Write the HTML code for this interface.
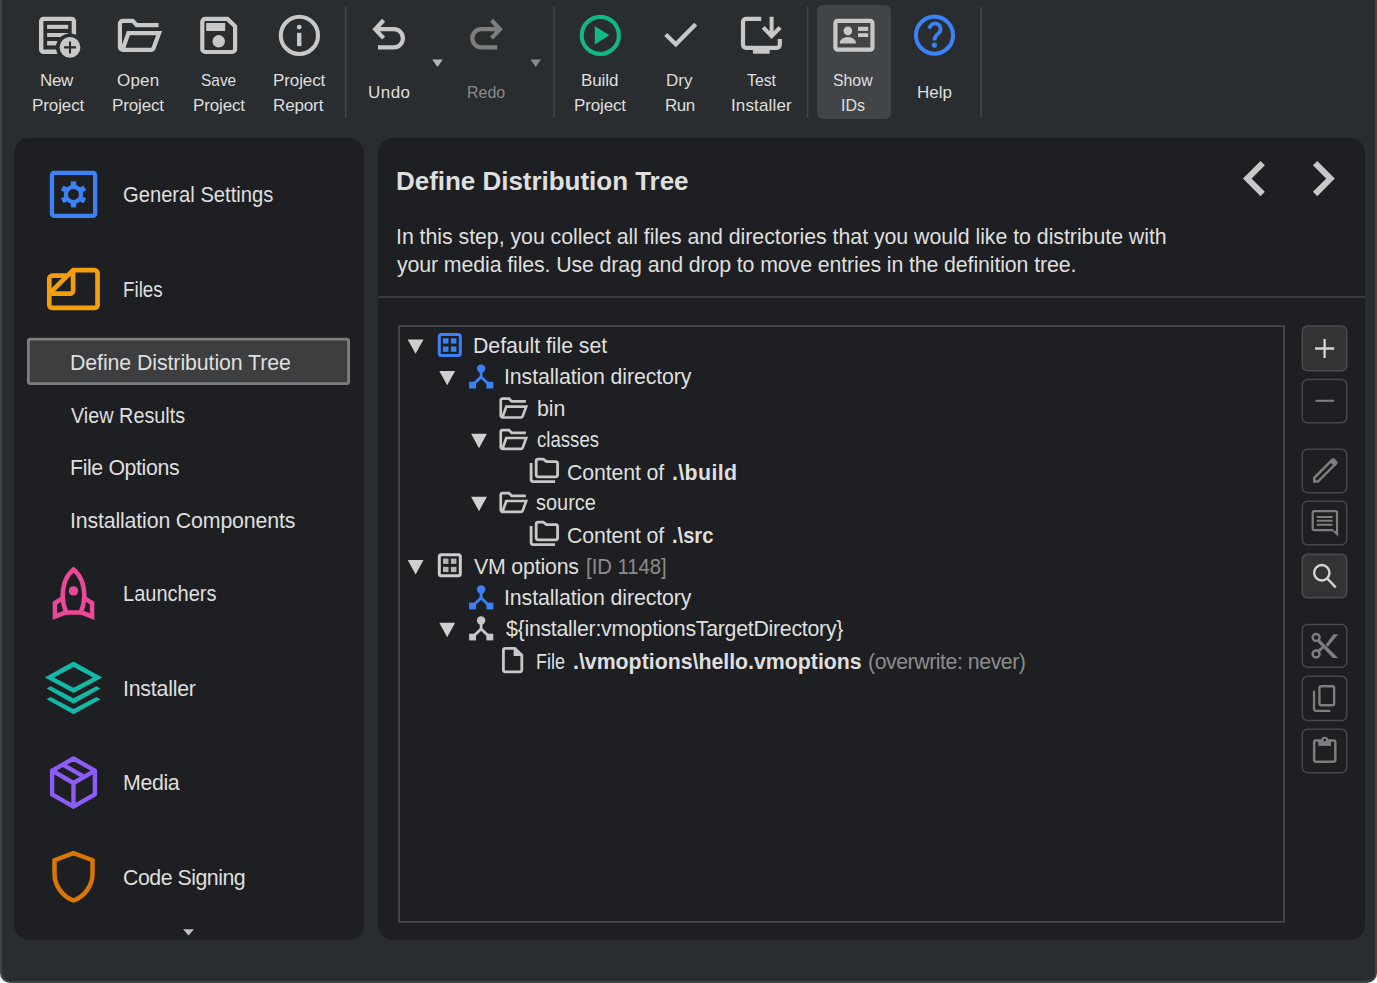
<!DOCTYPE html><html><head><meta charset="utf-8"><title>install4j - Define Distribution Tree</title><style>
html,body{margin:0;padding:0;background:#fff;}
body{width:1377px;height:983px;overflow:hidden;font-family:"Liberation Sans",sans-serif;}
#win{position:absolute;left:0;top:0;width:1373px;height:981px;background:#292d30;border:2px solid #444;border-top:none;border-radius:0 0 10px 10px;overflow:hidden;}
#root{position:absolute;left:-2px;top:0;width:1377px;height:983px;}
.t{position:absolute;white-space:nowrap;line-height:30px;height:30px;}
.panel{position:absolute;background:#1e1f22;border-radius:15px;}
.sep{position:absolute;width:1px;top:7px;height:111px;background:#434547;}
.btn{position:absolute;left:1301px;width:44px;height:44px;border:1px solid #48494b;border-radius:5px;background:#1e1f22;}
.btn.en{background:#323335;border-color:#4b4c4e;}
svg{position:absolute;overflow:visible;}
</style></head><body><div id="win"><div id="root">
<div style="position:absolute;left:817px;top:5px;width:74px;height:114px;border-radius:6px;background:#424548"></div>
<div class="panel" style="left:14px;top:138px;width:350px;height:802px"></div>
<div class="panel" style="left:378px;top:138px;width:987px;height:802px"></div>
<svg width="1377" height="983" viewBox="0 0 1377 983" style="left:0;top:0" fill="none"><path d="M345.6 7V117.6" stroke="#45474a" stroke-width="1.5"/><path d="M554.1 7V117.6" stroke="#45474a" stroke-width="1.5"/><path d="M807.6 7V117.6" stroke="#45474a" stroke-width="1.5"/><path d="M981.1 7V117.6" stroke="#45474a" stroke-width="1.5"/><rect x="28.4" y="339.1" width="320.2" height="44.5" rx="1.8" fill="#3d3e40" stroke="#7c7e80" stroke-width="2.8"/><path d="M378 296.9H1365" stroke="#424445" stroke-width="1.5"/><rect x="399.05" y="326.05" width="885" height="595.75" stroke="#4d4f4f" stroke-width="1.5"/><rect x="1302.3" y="325.95" width="44.4" height="44.75" rx="5.2" fill="#323335" stroke="#4b4c4f" stroke-width="1.5"/><rect x="1302.3" y="379.4" width="44.4" height="43.35" rx="5.2" fill="none" stroke="#47484b" stroke-width="1.5"/><rect x="1302.3" y="449.15" width="44.4" height="43.60" rx="5.2" fill="none" stroke="#47484b" stroke-width="1.5"/><rect x="1302.3" y="501.25" width="44.4" height="43.50" rx="5.2" fill="none" stroke="#47484b" stroke-width="1.5"/><rect x="1302.3" y="554.35" width="44.4" height="43.40" rx="5.2" fill="#323335" stroke="#4b4c4f" stroke-width="1.5"/><rect x="1302.3" y="624.5" width="44.4" height="42.75" rx="5.2" fill="none" stroke="#47484b" stroke-width="1.5"/><rect x="1302.3" y="676.35" width="44.4" height="44.20" rx="5.2" fill="none" stroke="#47484b" stroke-width="1.5"/><rect x="1302.3" y="729.15" width="44.4" height="43.60" rx="5.2" fill="none" stroke="#47484b" stroke-width="1.5"/></svg>
<svg width="1377" height="983" viewBox="0 0 1377 983" style="left:0;top:0" fill="none" stroke-linejoin="miter"><rect x="41.2" y="18.9" width="32.7" height="32.9" rx="2.4" stroke="#c8c8c8" stroke-width="4.4"/><rect x="47.1" y="24.8" width="21.1" height="4.1" fill="#c8c8c8"/><rect x="47.1" y="33" width="21.1" height="4" fill="#c8c8c8"/><rect x="47.1" y="41" width="21.1" height="4.4" fill="#c8c8c8"/><circle cx="70" cy="47.4" r="14" fill="#292d30"/><circle cx="70" cy="47.4" r="10.4" fill="#c8c8c8"/><path d="M64 47.4H76M70 41.4V53.4" stroke="#292d30" stroke-width="2.1"/><path d="M158.6 25.1H136.7L132.7 20.9H122.9a3 3 0 0 0-3 3V46.8a3 3 0 0 0 3 3H150.9a3 3 0 0 0 2.8-2L159.1 33.1H128.4L122.7 49.2" stroke="#c8c8c8" stroke-width="4.2"/><path d="M205.3 18.9H227.5L235.1 26.3V49a3 3 0 0 1-3 3H205.3a3 3 0 0 1-3-3V21.9a3 3 0 0 1 3-3Z" stroke="#c8c8c8" stroke-width="4.2"/><rect x="206.2" y="23" width="19" height="8" fill="#c8c8c8"/><circle cx="218.7" cy="41.3" r="6.2" fill="#c8c8c8"/><circle cx="299.4" cy="35.4" r="18.6" stroke="#c8c8c8" stroke-width="4.1"/><circle cx="299.2" cy="27.1" r="2.4" fill="#c8c8c8"/><rect x="297" y="32.8" width="4.4" height="13.3" fill="#c8c8c8"/><path d="M383.6 20.3L375.2 29.2L383.6 38.1M375.5 29.2H393.85A9.05 9.05 0 0 1 393.85 47.3H378" stroke="#c8c8c8" stroke-width="4.2"/><path d="M432.2 59.6H442.8L437.5 67.1Z" fill="#b4b4b4"/><g transform="translate(875.2 0) scale(-1 1)"><path d="M383.6 20.3L375.2 29.2L383.6 38.1M375.5 29.2H393.85A9.05 9.05 0 0 1 393.85 47.3H378" stroke="#7e7e7e" stroke-width="4.2"/></g><path d="M530.4 59.6H541L535.7 67.1Z" fill="#8a8a8a"/><circle cx="600.3" cy="35.4" r="18.55" stroke="#10b981" stroke-width="4.1"/><path d="M594.8 25.9V44.5L609.4 35.2Z" fill="#10b981"/><path d="M665.7 34.5L675.8 44.2L695.7 24.3" stroke="#c8c8c8" stroke-width="4.2"/><path d="M761.2 18.8H746a3 3 0 0 0-3 3V44.8a3 3 0 0 0 3 3H776.8a3 3 0 0 0 3-3V39" stroke="#c8c8c8" stroke-width="4.2"/><rect x="752.9" y="49.5" width="16.8" height="4.2" fill="#c8c8c8"/><path d="M763.2 27.4L771.6 36.1L780.1 27.5M771.6 16.7V35" stroke="#c8c8c8" stroke-width="4"/><rect x="835.4" y="20.8" width="37.1" height="28.9" rx="2.2" stroke="#c8c8c8" stroke-width="4.2"/><circle cx="847.9" cy="30.9" r="4.3" fill="#c8c8c8"/><path d="M839.7 43.4A8.15 6.4 0 0 1 856 43.4Z" fill="#c8c8c8"/><rect x="858" y="26.8" width="10.2" height="4.1" fill="#c8c8c8"/><rect x="858" y="33.2" width="10.2" height="3.8" fill="#c8c8c8"/><circle cx="934.5" cy="35.2" r="18.55" stroke="#3b82f6" stroke-width="4.1"/><path d="M929.6 28.6A5.5 5.5 0 1 1 938.6 33.2Q934.5 36.2 934.5 40.4" stroke="#3b82f6" stroke-width="3.7"/><circle cx="934.4" cy="45.1" r="2.6" fill="#3b82f6"/><rect x="51.95" y="172.85" width="43.2" height="43.1" rx="2.2" stroke="#3b82f6" stroke-width="4.3"/><circle cx="73.5" cy="194.4" r="7.6" stroke="#3b82f6" stroke-width="4.2"/><rect x="70.8" y="181.4" width="5.4" height="5.2" fill="#3b82f6" transform="rotate(0 73.5 194.4)"/><rect x="70.8" y="181.4" width="5.4" height="5.2" fill="#3b82f6" transform="rotate(60 73.5 194.4)"/><rect x="70.8" y="181.4" width="5.4" height="5.2" fill="#3b82f6" transform="rotate(120 73.5 194.4)"/><rect x="70.8" y="181.4" width="5.4" height="5.2" fill="#3b82f6" transform="rotate(180 73.5 194.4)"/><rect x="70.8" y="181.4" width="5.4" height="5.2" fill="#3b82f6" transform="rotate(240 73.5 194.4)"/><rect x="70.8" y="181.4" width="5.4" height="5.2" fill="#3b82f6" transform="rotate(300 73.5 194.4)"/><path d="M52.3 275.7H67.7L73.1 270.2H94.55a3 3 0 0 1 3 3V304.9a3 3 0 0 1-3 3H52.3a3 3 0 0 1-3-3V278.7a3 3 0 0 1 3-3ZM73.1 270.4V290.7a3 3 0 0 1-3 3H49.3L73.1 270.2" stroke="#f59e0b" stroke-width="4.7" stroke-linejoin="round"/><path d="M73.5 569.6C65.8 576 62.7 586 62.7 596C62.7 602 64.2 607.5 66.2 612.4H80.8C82.8 607.5 84.3 602 84.3 596C84.3 586 81.2 576 73.5 569.6Z" stroke="#ec4899" stroke-width="4.5"/><circle cx="73.5" cy="590.9" r="4.7" fill="#ec4899"/><path d="M62 598.6L54.9 603V616.7L66.2 612.2" stroke="#ec4899" stroke-width="4.5"/><path d="M85 598.6L92.1 603V616.7L80.8 612.2" stroke="#ec4899" stroke-width="4.5"/><path fill-rule="evenodd" d="M44.8 677.4L73.5 661.6L102.3 677.4L73.5 693.1ZM54 677.4L73.5 667L93 677.4L73.5 687.7Z" fill="#14b8a6"/><path d="M46.6 688.4L50.7 686.2L73.5 698.3L96.4 686.2L100.6 688.4L73.5 703.7Z" fill="#14b8a6"/><path d="M46.6 699.3L50.7 696.9L73.5 709L96.4 696.9L100.6 699.3L73.5 714.3Z" fill="#14b8a6"/><path d="M73.5 758.5L94.9 770.7V794.4L73.5 806.7L52.1 794.4V770.7ZM52.1 770.7L73.5 783L94.9 770.7M73.5 783V806.7M62.8 764.6L84.2 776.9" stroke="#8b5cf6" stroke-width="4.4" stroke-linejoin="round"/><path d="M73.5 853.2L54.5 860.2V874C54.5 885.5 62.5 896.5 73.5 900.5C84.5 896.5 92.5 885.5 92.5 874V860.2Z" stroke="#d97706" stroke-width="4.5"/><path d="M183 929.2H194L188.5 935.4Z" fill="#c0c0c0"/><path d="M1262.7 163.2L1247.3 178.6L1262.7 194" stroke="#c8c8c8" stroke-width="6.1"/><path d="M1315.1 163.2L1330.5 178.6L1315.1 194" stroke="#c8c8c8" stroke-width="6.1"/><path d="M407.7 339.4H423.5L415.59999999999997 353.79999999999995Z" fill="#d0d0d0"/><rect x="439.3" y="334.5" width="21" height="21" rx="2" stroke="#3b82f6" stroke-width="3"/><rect x="443.0" y="338.3" width="5.5" height="5.3" fill="#3b82f6"/><rect x="443.0" y="346.5" width="5.5" height="5.3" fill="#3b82f6"/><rect x="450.90000000000003" y="338.3" width="5.5" height="5.3" fill="#3b82f6"/><rect x="450.90000000000003" y="346.5" width="5.5" height="5.3" fill="#3b82f6"/><path d="M439.3 370.9H455.1L447.2 385.29999999999995Z" fill="#d0d0d0"/><circle cx="481.1" cy="368.6" r="4.2" fill="#3b82f6"/><path d="M481.1 368.6V377.40000000000003M472.6 385.0L481.1 377.0L489.6 385.0" stroke="#3b82f6" stroke-width="2.8"/><rect x="469.1" y="381.8" width="6.9" height="6.7" fill="#3b82f6"/><rect x="486.40000000000003" y="381.8" width="6.9" height="6.7" fill="#3b82f6"/><g transform="translate(422.80 385.11) scale(0.65)"><path d="M158.6 25.1H136.7L132.7 20.9H122.9a3 3 0 0 0-3 3V46.8a3 3 0 0 0 3 3H150.9a3 3 0 0 0 2.8-2L159.1 33.1H128.4L122.7 49.2" stroke="#c8c8c8" stroke-width="4.1"/></g><path d="M471.1 433.8H486.90000000000003L479.0 448.2Z" fill="#d0d0d0"/><g transform="translate(422.80 416.51) scale(0.65)"><path d="M158.6 25.1H136.7L132.7 20.9H122.9a3 3 0 0 0-3 3V46.8a3 3 0 0 0 3 3H150.9a3 3 0 0 0 2.8-2L159.1 33.1H128.4L122.7 49.2" stroke="#c8c8c8" stroke-width="4.1"/></g><g transform="translate(0.00 0.00)"><path d="M538.2 459.2H543.3L546.5 461.7H555.6a2 2 0 0 1 2 2V474.8a2 2 0 0 1-2 2H538.2a2 2 0 0 1-2-2V461.2a2 2 0 0 1 2-2Z" stroke="#c8c8c8" stroke-width="2.8"/><path d="M531.1 463.1V479.6a2 2 0 0 0 2 2H555.1" stroke="#c8c8c8" stroke-width="2.8"/></g><path d="M471.1 496.8H486.90000000000003L479.0 511.2Z" fill="#d0d0d0"/><g transform="translate(422.80 479.51) scale(0.65)"><path d="M158.6 25.1H136.7L132.7 20.9H122.9a3 3 0 0 0-3 3V46.8a3 3 0 0 0 3 3H150.9a3 3 0 0 0 2.8-2L159.1 33.1H128.4L122.7 49.2" stroke="#c8c8c8" stroke-width="4.1"/></g><g transform="translate(0.00 63.00)"><path d="M538.2 459.2H543.3L546.5 461.7H555.6a2 2 0 0 1 2 2V474.8a2 2 0 0 1-2 2H538.2a2 2 0 0 1-2-2V461.2a2 2 0 0 1 2-2Z" stroke="#c8c8c8" stroke-width="2.8"/><path d="M531.1 463.1V479.6a2 2 0 0 0 2 2H555.1" stroke="#c8c8c8" stroke-width="2.8"/></g><path d="M407.7 560H423.5L415.59999999999997 574.4Z" fill="#d0d0d0"/><rect x="439.3" y="554.8" width="21" height="21" rx="2" stroke="#cdcdcd" stroke-width="3"/><rect x="443.0" y="558.5999999999999" width="5.5" height="5.3" fill="#b4b4b4"/><rect x="443.0" y="566.8" width="5.5" height="5.3" fill="#b4b4b4"/><rect x="450.90000000000003" y="558.5999999999999" width="5.5" height="5.3" fill="#b4b4b4"/><rect x="450.90000000000003" y="566.8" width="5.5" height="5.3" fill="#b4b4b4"/><circle cx="481.1" cy="589.5" r="4.2" fill="#3b82f6"/><path d="M481.1 589.5V598.3M472.6 605.9L481.1 597.9L489.6 605.9" stroke="#3b82f6" stroke-width="2.8"/><rect x="469.1" y="602.7" width="6.9" height="6.7" fill="#3b82f6"/><rect x="486.40000000000003" y="602.7" width="6.9" height="6.7" fill="#3b82f6"/><path d="M439.3 622.8H455.1L447.2 637.1999999999999Z" fill="#d0d0d0"/><circle cx="481.1" cy="620.5" r="4.2" fill="#c8c8c8"/><path d="M481.1 620.5V629.3M472.6 636.9L481.1 628.9L489.6 636.9" stroke="#c8c8c8" stroke-width="2.8"/><rect x="469.1" y="633.7" width="6.9" height="6.7" fill="#c8c8c8"/><rect x="486.40000000000003" y="633.7" width="6.9" height="6.7" fill="#c8c8c8"/><g transform="translate(0.00 0.00)"><path d="M505.4 648.3H514.8L521.8 655V669.8a2 2 0 0 1-2 2H505.4a2 2 0 0 1-2-2V650.3a2 2 0 0 1 2-2Z" stroke="#c8c8c8" stroke-width="2.8"/><path d="M513.6 648V656H522Z" fill="#c8c8c8"/></g><path d="M1315.1 348.5H1334.2M1324.6 339V358" stroke="#d4d4d4" stroke-width="2.3"/><path d="M1315.5 400.8H1334.2" stroke="#7e7e7e" stroke-width="2.1"/><path d="M1314.25 481.55V477.85L1331 461.1L1334.7 464.8L1317.95 481.55Z" stroke="#7e7e7e" stroke-width="2.5"/><path d="M1329.6 460.7L1332.2 458.6a1.7 1.7 0 0 1 2.3 0.1L1337.2 461.4a1.7 1.7 0 0 1 0.1 2.3L1335.2 466.2Z" fill="#7e7e7e"/><path d="M1337 533.8V512.6a1.5 1.5 0 0 0-1.5-1.5H1314.2a1.5 1.5 0 0 0-1.5 1.5V528.6a1.5 1.5 0 0 0 1.5 1.5H1333.5" stroke="#7e7e7e" stroke-width="2.2"/><path d="M1332.4 531.1H1338.1V536.6Z" fill="#7e7e7e"/><path d="M1316.8 517H1332.7M1316.8 520.8H1332.7M1316.8 524.7H1332.7" stroke="#7e7e7e" stroke-width="2"/><circle cx="1321.8" cy="572.75" r="7.7" stroke="#d4d4d4" stroke-width="2.4"/><path d="M1327.3 578.5L1335.7 587.3" stroke="#d4d4d4" stroke-width="2.5"/><circle cx="1316.1" cy="637.5" r="3.5" stroke="#7e7e7e" stroke-width="2.4"/><circle cx="1316.1" cy="654" r="3.5" stroke="#7e7e7e" stroke-width="2.4"/><path d="M1319.6 639.4L1338.2 658H1332.8L1317.6 642Z" fill="#7e7e7e"/><path d="M1319.8 652L1324 648L1322.2 646.2L1317.8 649.8Z" fill="#7e7e7e"/><path d="M1325.8 644.8L1333.2 634.2H1338.2L1327.8 646.8Z" fill="#7e7e7e"/><rect x="1319.45" y="686.25" width="14.7" height="19" rx="1.8" stroke="#7e7e7e" stroke-width="2.3"/><path d="M1314.05 690.7V709a1.8 1.8 0 0 0 1.8 1.8H1330.3" stroke="#7e7e7e" stroke-width="2.3"/><rect x="1314.15" y="740.45" width="21.2" height="21.2" rx="1.8" stroke="#7e7e7e" stroke-width="2.5"/><rect x="1318.3" y="740" width="12.7" height="5.9" fill="#7e7e7e"/><circle cx="1324.7" cy="740.3" r="3.6" fill="#7e7e7e"/><circle cx="1324.7" cy="740.1" r="1.3" fill="#1e1f22"/></svg>
<div class="t" style="left:40.00px;top:66px;font-size:17px;letter-spacing:-0.325px;color:#dfdfdf;">New</div>
<div class="t" style="left:32.00px;top:91px;font-size:17px;letter-spacing:-0.108px;color:#dfdfdf;">Project</div>
<div class="t" style="left:117.00px;top:66px;font-size:17px;letter-spacing:0.2px;color:#dfdfdf;">Open</div>
<div class="t" style="left:112.00px;top:91px;font-size:17px;letter-spacing:-0.15px;color:#dfdfdf;">Project</div>
<div class="t" style="left:201.00px;top:66px;font-size:17px;letter-spacing:0px;color:#dfdfdf;transform:scaleX(0.9081);transform-origin:0 0;">Save</div>
<div class="t" style="left:193.00px;top:91px;font-size:17px;letter-spacing:-0.15px;color:#dfdfdf;">Project</div>
<div class="t" style="left:273.00px;top:66px;font-size:17px;letter-spacing:-0.108px;color:#dfdfdf;">Project</div>
<div class="t" style="left:273.00px;top:91px;font-size:17px;letter-spacing:-0.13px;color:#dfdfdf;">Report</div>
<div class="t" style="left:368.00px;top:78px;font-size:17px;letter-spacing:0.45px;color:#dfdfdf;">Undo</div>
<div class="t" style="left:467.00px;top:78px;font-size:17px;letter-spacing:0px;color:#8a8a8a;transform:scaleX(0.9385);transform-origin:0 0;">Redo</div>
<div class="t" style="left:581.00px;top:66px;font-size:17px;letter-spacing:-0.1px;color:#dfdfdf;">Build</div>
<div class="t" style="left:574.00px;top:91px;font-size:17px;letter-spacing:-0.15px;color:#dfdfdf;">Project</div>
<div class="t" style="left:666.00px;top:66px;font-size:17px;letter-spacing:0.05px;color:#dfdfdf;">Dry</div>
<div class="t" style="left:665.00px;top:91px;font-size:17px;letter-spacing:-0.45px;color:#dfdfdf;">Run</div>
<div class="t" style="left:747.00px;top:66px;font-size:17px;letter-spacing:0px;color:#dfdfdf;transform:scaleX(0.9306);transform-origin:0 0;">Test</div>
<div class="t" style="left:731.00px;top:91px;font-size:17px;letter-spacing:0.138px;color:#dfdfdf;">Installer</div>
<div class="t" style="left:833.00px;top:66px;font-size:17px;letter-spacing:0px;color:#dfdfdf;transform:scaleX(0.9310);transform-origin:0 0;">Show</div>
<div class="t" style="left:841.00px;top:91px;font-size:17px;letter-spacing:0px;color:#dfdfdf;transform:scaleX(0.9391);transform-origin:0 0;">IDs</div>
<div class="t" style="left:917.00px;top:78px;font-size:17px;letter-spacing:0.033px;color:#dfdfdf;">Help</div>
<div class="t" style="left:123.00px;top:180px;font-size:21.33px;letter-spacing:0px;color:#dfdfdf;transform:scaleX(0.9462);transform-origin:0 0;">General Settings</div>
<div class="t" style="left:123.00px;top:275px;font-size:21.33px;letter-spacing:0px;color:#dfdfdf;transform:scaleX(0.8821);transform-origin:0 0;">Files</div>
<div class="t" style="left:70.00px;top:348px;font-size:21.33px;letter-spacing:-0.085px;color:#dfdfdf;">Define Distribution Tree</div>
<div class="t" style="left:71.00px;top:401px;font-size:21.33px;letter-spacing:0px;color:#dfdfdf;transform:scaleX(0.9287);transform-origin:0 0;">View Results</div>
<div class="t" style="left:70.00px;top:453px;font-size:21.33px;letter-spacing:-0.382px;color:#dfdfdf;">File Options</div>
<div class="t" style="left:70.00px;top:506px;font-size:21.33px;letter-spacing:-0.157px;color:#dfdfdf;">Installation Components</div>
<div class="t" style="left:123.00px;top:579px;font-size:21.33px;letter-spacing:0px;color:#dfdfdf;transform:scaleX(0.9387);transform-origin:0 0;">Launchers</div>
<div class="t" style="left:123.00px;top:674px;font-size:21.33px;letter-spacing:-0.213px;color:#dfdfdf;">Installer</div>
<div class="t" style="left:123.00px;top:768px;font-size:21.33px;letter-spacing:-0.363px;color:#dfdfdf;">Media</div>
<div class="t" style="left:123.00px;top:863px;font-size:21.33px;letter-spacing:-0.495px;color:#dfdfdf;">Code Signing</div>
<div class="t" style="left:396.00px;top:166px;font-size:26px;letter-spacing:-0.03px;color:#dfdfdf;font-weight:700;">Define Distribution Tree</div>
<div class="t" style="left:396.00px;top:222px;font-size:21.33px;letter-spacing:-0.039px;color:#dfdfdf;">In this step, you collect all files and directories that you would like to distribute with</div>
<div class="t" style="left:397.00px;top:250px;font-size:21.33px;letter-spacing:-0.111px;color:#dfdfdf;">your media files. Use drag and drop to move entries in the definition tree.</div>
<div class="t" style="left:473.00px;top:331px;font-size:21.33px;letter-spacing:-0.063px;color:#dfdfdf;">Default file set</div>
<div class="t" style="left:504.00px;top:362px;font-size:21.33px;letter-spacing:-0.105px;color:#dfdfdf;">Installation directory</div>
<div class="t" style="left:537.00px;top:394px;font-size:21.33px;letter-spacing:-0.1px;color:#dfdfdf;">bin</div>
<div class="t" style="left:537.00px;top:425px;font-size:21.33px;letter-spacing:0px;color:#dfdfdf;transform:scaleX(0.8721);transform-origin:0 0;">classes</div>
<div class="t" style="left:567.00px;top:458px;font-size:21.33px;letter-spacing:-0.133px;color:#dfdfdf;">Content of</div>
<div class="t" style="left:672.00px;top:458px;font-size:21.33px;letter-spacing:0.383px;color:#dfdfdf;font-weight:700;">.\build</div>
<div class="t" style="left:536.00px;top:488px;font-size:21.33px;letter-spacing:0px;color:#dfdfdf;transform:scaleX(0.9363);transform-origin:0 0;">source</div>
<div class="t" style="left:567.00px;top:521px;font-size:21.33px;letter-spacing:-0.133px;color:#dfdfdf;">Content of</div>
<div class="t" style="left:672.00px;top:521px;font-size:21.33px;letter-spacing:0px;color:#dfdfdf;font-weight:700;transform:scaleX(0.9417);transform-origin:0 0;">.\src</div>
<div class="t" style="left:474.00px;top:552px;font-size:21.33px;letter-spacing:-0.189px;color:#dfdfdf;">VM options</div>
<div class="t" style="left:586.00px;top:552px;font-size:21.33px;letter-spacing:0px;color:#8c8c8c;transform:scaleX(0.9494);transform-origin:0 0;">[ID 1148]</div>
<div class="t" style="left:504.00px;top:583px;font-size:21.33px;letter-spacing:-0.105px;color:#dfdfdf;">Installation directory</div>
<div class="t" style="left:506.00px;top:614px;font-size:21.33px;letter-spacing:-0.276px;color:#dfdfdf;">${installer:vmoptionsTargetDirectory}</div>
<div class="t" style="left:536.00px;top:647px;font-size:21.33px;letter-spacing:0px;color:#dfdfdf;transform:scaleX(0.8453);transform-origin:0 0;">File</div>
<div class="t" style="left:573.00px;top:647px;font-size:21.33px;letter-spacing:-0.017px;color:#dfdfdf;font-weight:700;">.\vmoptions\hello.vmoptions</div>
<div class="t" style="left:868.00px;top:647px;font-size:21.33px;letter-spacing:-0.468px;color:#8c8c8c;">(overwrite: never)</div>
</div></div></body></html>
